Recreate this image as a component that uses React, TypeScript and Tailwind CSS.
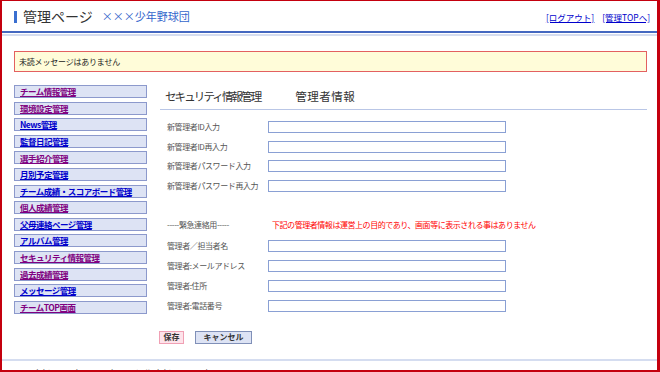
import React from 'react';

const menu: { label: string; visited: boolean }[] = [
  { label: 'チーム情報管理', visited: true },
  { label: '環境設定管理', visited: true },
  { label: 'News管理', visited: false },
  { label: '監督日記管理', visited: false },
  { label: '選手紹介管理', visited: true },
  { label: '月別予定管理', visited: false },
  { label: 'チーム成績・スコアボード管理', visited: false },
  { label: '個人成績管理', visited: true },
  { label: '父母連絡ページ管理', visited: false },
  { label: 'アルバム管理', visited: false },
  { label: 'セキュリティ情報管理', visited: true },
  { label: '過去成績管理', visited: true },
  { label: 'メッセージ管理', visited: false },
  { label: 'チームTOP画面', visited: true },
];

const topFields = ['新管理者ID入力', '新管理者ID再入力', '新管理者パスワード入力', '新管理者パスワード再入力'];
const contactFields = ['管理者／担当者名', '管理者:メールアドレス', '管理者:住所', '管理者:電話番号'];

const FieldRow: React.FC<{ label: string }> = ({ label }) => (
  <div className="flex items-center h-[12px]">
    <span className="w-[101px] text-[8px] tracking-[-0.4px] text-[#555] whitespace-nowrap">{label}</span>
    <input type="text" className="w-[238px] h-[12px] border border-[#8aa0d4] bg-white" />
  </div>
);

export default function App() {
  return (
    <div className="w-[660px] h-[372px] overflow-hidden bg-white border-t border-l-2 border-r-[3px] border-b-2 border-[#c4000e] font-['Noto_Sans_CJK_JP',sans-serif] flex flex-col">
      {/* header */}
      <div className="h-[32px] flex items-center pl-[12px] pr-[7px] border-b-2 border-[#4468c0] shrink-0">
        <div className="w-[3px] h-[12px] bg-[#3a6fd0] mt-[1px]" />
        <span className="ml-[6px] text-[14px] text-[#333] leading-none">管理ページ</span>
        <span className="ml-[9px] text-[11px] text-[#3366cc] leading-none">×××少年野球団</span>
        <div className="ml-auto flex gap-[8px] text-[8.5px] text-[#0000cc] underline mt-[2px]">
          <a href="#">[ログアウト]</a>
          <a href="#">[管理TOPへ]</a>
        </div>
      </div>
      <div className="mt-[1px] h-[2px] bg-[#d5ddf0] shrink-0" />

      {/* message */}
      <div className="mt-[15px] ml-[12px] mr-[10px] h-[21px] border border-[#e36060] bg-[#fffcd9] flex items-center pl-[4px] shrink-0">
        <span className="text-[8px] text-[#222] tracking-[-0.2px]">未読メッセージはありません</span>
      </div>

      {/* body */}
      <div className="flex mt-[13px] pl-[12px] pr-[10px] shrink-0">
        <div className="w-[133px] flex flex-col gap-[3.6px]">
          {menu.map((m) => (
            <a
              key={m.label}
              href="#"
              className={`h-[13px] border border-[#8c99cc] bg-[#dde3f4] pl-[5px] flex items-center text-[8.5px] font-bold underline tracking-[-0.5px] whitespace-nowrap ${
                m.visited ? 'text-[#800080]' : 'text-[#0000cc]'
              }`}
            >
              {m.label}
            </a>
          ))}
        </div>

        <div className="ml-[13px] flex-1 flex flex-col">
          <div className="h-[25px] border-b border-[#b9c6e6] flex items-center pl-[5px]">
            <span className="text-[11.5px] text-[#333] tracking-[-1.9px]">セキュリティ情報管理</span>
            <span className="ml-[35px] text-[11.5px] text-[#333] tracking-[0.5px]">管理者情報</span>
          </div>

          <div className="mt-[11px] pl-[7px] flex flex-col gap-[7.6px]">
            {topFields.map((f) => (
              <FieldRow key={f} label={f} />
            ))}
          </div>

          <div className="mt-[27px] pl-[7px] flex items-center h-[12px]">
            <span className="w-[105px] text-[8px] tracking-[-0.4px] text-[#555] whitespace-nowrap">-----緊急連絡用-----</span>
            <span className="text-[8px] tracking-[-0.45px] text-[#ff0000] whitespace-nowrap">
              下記の管理者情報は運営上の目的であり、画面等に表示される事はありません
            </span>
          </div>

          <div className="mt-[9px] pl-[7px] flex flex-col gap-[8px]">
            {contactFields.map((f) => (
              <FieldRow key={f} label={f} />
            ))}
          </div>

          <div className="mt-[19px] flex items-center gap-[11px]">
            <button className="h-[13px] w-[25px] border border-[#f0a0b4] bg-[#fde3ea] text-[8px] font-bold text-[#333] flex items-center justify-center leading-none -ml-[1px]">
              保存
            </button>
            <button className="h-[13px] w-[57px] border border-[#8090b8] bg-[#dde3f4] text-[8px] font-bold text-[#333] flex items-center justify-center leading-none">
              キャンセル
            </button>
          </div>
        </div>
      </div>

      {/* footer */}
      <div className="mt-[15px] h-[2px] bg-[#d5ddf0] shrink-0" />
      <div className="mt-[8px] pl-[12px] text-[8px] text-[#666] whitespace-nowrap leading-none shrink-0">
        Copyright 2007 shonen-yakyu.net All Right Reserved.
      </div>
    </div>
  );
}
